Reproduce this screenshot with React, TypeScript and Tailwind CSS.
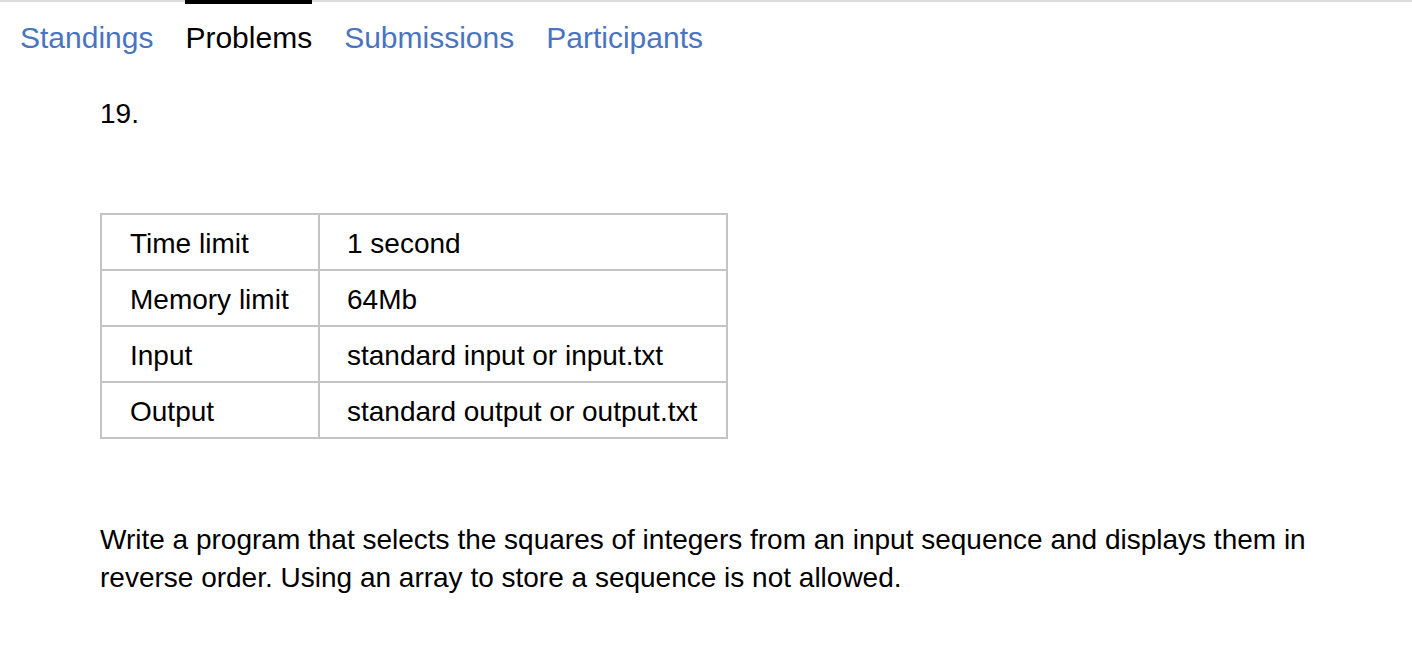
import React from "react";

const tabs = [
  { label: "Standings", active: false },
  { label: "Problems", active: true },
  { label: "Submissions", active: false },
  { label: "Participants", active: false },
];

const limits: [string, string][] = [
  ["Time limit", "1 second"],
  ["Memory limit", "64Mb"],
  ["Input", "standard input or input.txt"],
  ["Output", "standard output or output.txt"],
];

const App: React.FC = () => {
  return (
    <div className="min-h-[672px] bg-white text-black font-['Liberation_Sans',Arial,sans-serif]">
      <div className="border-t-2 border-[#dcdcdc]">
        <nav className="flex gap-[32px] pl-[20px] -mt-[2px]">
          {tabs.map((tab) => (
            <a
              key={tab.label}
              href="#"
              className={
                tab.active
                  ? "border-t-[4px] border-black pt-[14px] text-[30px] leading-[40px] text-black"
                  : "border-t-[4px] border-transparent pt-[14px] text-[30px] leading-[40px] text-[#4a74c0]"
              }
            >
              {tab.label}
            </a>
          ))}
        </nav>
      </div>

      <main className="px-[100px] text-[28px]">
        <h2 className="mt-[36px] leading-[40px]">19.</h2>

        <table className="mt-[79px] border-collapse border-2 border-[#c4c4c4]">
          <tbody>
            {limits.map(([name, value]) => (
              <tr key={name} className="h-[56px]">
                <td className="w-[218px] border-2 border-[#c4c4c4] pl-[28px] pt-[3px] align-middle">
                  {name}
                </td>
                <td className="w-[408px] border-2 border-[#c4c4c4] pl-[27px] pt-[3px] align-middle">
                  {value}
                </td>
              </tr>
            ))}
          </tbody>
        </table>

        <p className="mt-[82px] max-w-[1220px] leading-[38px]">
          Write a program that selects the squares of integers from an input sequence and displays them in
          reverse order. Using an array to store a sequence is not allowed.
        </p>
      </main>
    </div>
  );
};

export default App;
